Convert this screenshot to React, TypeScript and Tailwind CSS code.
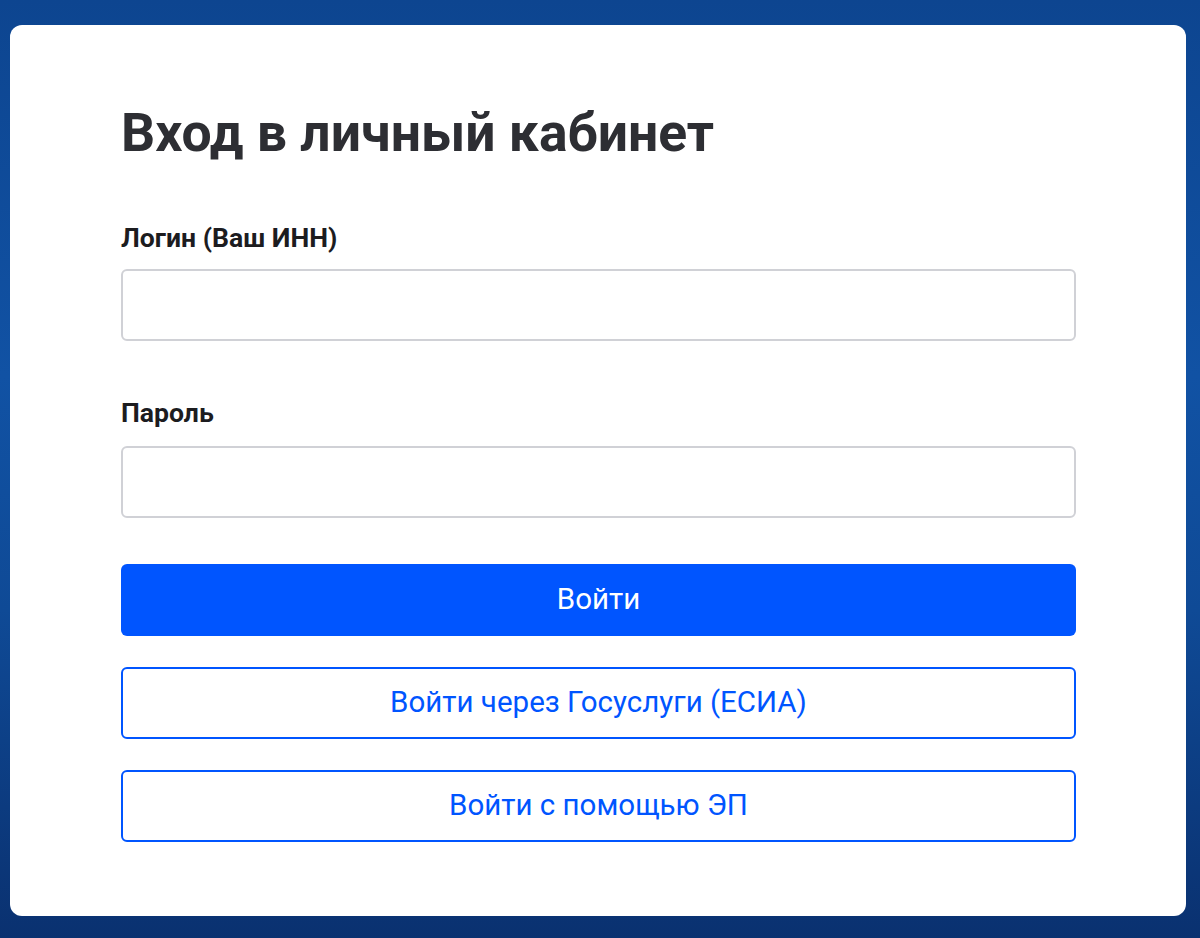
export default function App() {
  return (
    <div className="h-[938px] w-full bg-[linear-gradient(180deg,#0d4590_0%,#1152a4_40%,#0f4a96_65%,#0a3170_100%)] pl-[10px] pr-[14px] pt-[25px] font-['Roboto',sans-serif]">
      <div className="rounded-[12px] bg-white pl-[111px] pr-[110px] pt-[76px] pb-[74px]">
        <h1 className="text-[53.5px] font-bold leading-[63.6px] text-[#2d2e33]">Вход в личный кабинет</h1>

        <label className="mt-[57px] block text-[26.6px] font-bold leading-[32px] text-[#1c1c1f]">
          Логин (Ваш ИНН)
        </label>
        <input
          type="text"
          className="mt-[15px] block h-[72px] w-full rounded-[6px] border-2 border-[#d0d1d6] bg-white px-4 text-[20px] outline-none"
        />

        <label className="mt-[56px] block text-[26.6px] font-bold leading-[32px] text-[#1c1c1f]">Пароль</label>
        <input
          type="password"
          className="mt-[17px] block h-[72px] w-full rounded-[6px] border-2 border-[#d0d1d6] bg-white px-4 text-[20px] outline-none"
        />

        <button className="mt-[46px] block h-[72px] w-full rounded-[6px] bg-[#0055ff] text-[29.5px] text-white">
          Войти
        </button>
        <button className="mt-[31px] block h-[72px] w-full rounded-[6px] border-2 border-[#0055ff] bg-white text-[29.5px] text-[#0055ff]">
          Войти через Госуслуги (ЕСИА)
        </button>
        <button className="mt-[31px] block h-[72px] w-full rounded-[6px] border-2 border-[#0055ff] bg-white text-[29.5px] text-[#0055ff]">
          Войти с помощью ЭП
        </button>
      </div>
    </div>
  );
}
